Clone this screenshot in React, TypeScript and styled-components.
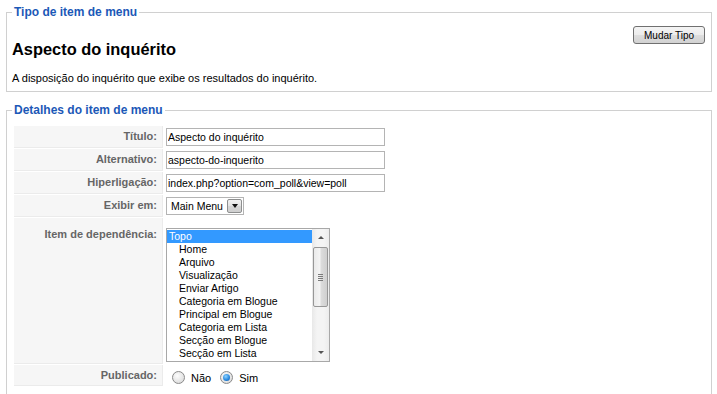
import React from 'react'
import styled, {createGlobalStyle} from 'styled-components'

const GlobalStyle = createGlobalStyle`
  html, body {
    margin: 0;
    padding: 0;
    background: #fff;
  }
  body {
    font-family: "Liberation Sans", Arial, sans-serif;
    font-size: 11px;
    color: #000;
  }
`

const Page = styled.div`
  padding: 5px 5px 0 6px;
`

const Fieldset = styled.fieldset<{$gap?: number; $bottom?: number}>`
  margin: ${({$gap}) => $gap || 0}px 0 0 0;
  border: 1px solid #d0d0d0;
  padding: 0 6px ${({$bottom}) => $bottom ?? 6}px 5px;
  min-width: 0;
`

const Legend = styled.legend`
  color: #1c58b7;
  font-size: 12px;
  font-weight: bold;
  line-height: 14px;
  padding: 0 2px;
`

const TypeHeader = styled.div`
  display: flex;
  justify-content: space-between;
  align-items: flex-start;
`

const TypeTitle = styled.h2`
  margin: 20px 0 0;
  font-size: 16.4px;
  line-height: 20px;
  font-weight: bold;
`

const TypeDesc = styled.p`
  margin: 12px 0 0;
  font-size: 11px;
  line-height: 14px;
`

const ChangeButton = styled.button`
  margin-top: 7px;
  width: 72px;
  height: 18px;
  padding: 0;
  border: 1px solid #707070;
  border-radius: 3px;
  background: linear-gradient(#f4f4f4, #ececec 50%, #dedede 50%, #d2d2d2);
  font-family: "Liberation Sans", Arial, sans-serif;
  font-size: 10px;
  color: #000;
`

const FormGrid = styled.div`
  display: grid;
  grid-template-columns: 149px max-content;
  row-gap: 1px;
  column-gap: 1px;
  margin: 9px 0 0 2px;
`

const Key = styled.div<{$top?: boolean}>`
  display: flex;
  justify-content: flex-end;
  align-items: ${({$top}) => ($top ? 'flex-start' : 'center')};
  padding: ${({$top}) => ($top ? '10px 5px 0 0' : '0 5px 0 0')};
  background: #f6f6f6;
  border-bottom: 1px solid #ebebeb;
  border-right: 1px solid #ebebeb;
  color: #666;
  font-weight: bold;
  font-size: 11px;
  line-height: 13px;
`

const Field = styled.div<{$padTop?: number}>`
  display: flex;
  align-items: center;
  padding: ${({$padTop}) => $padTop ?? 2}px 0 2px 2px;
`

const TextInput = styled.input`
  box-sizing: border-box;
  width: 219px;
  height: 18px;
  margin: 0;
  padding: 0 1px;
  border: 1px solid #b4b4b4;
  font-family: "Liberation Sans", Arial, sans-serif;
  font-size: 10.5px;
  color: #000;
  outline: none;
`

const SelectBox = styled.div`
  box-sizing: border-box;
  display: flex;
  align-items: center;
  justify-content: space-between;
  width: 78px;
  height: 18px;
  border: 1px solid #b4b4b4;
  padding: 0 1px 0 4px;
  font-size: 10.5px;
`

const SelectArrow = styled.span`
  box-sizing: border-box;
  display: flex;
  align-items: center;
  justify-content: center;
  width: 15px;
  height: 14px;
  border: 1px solid #8e8f8f;
  border-radius: 2px;
  background: linear-gradient(#f2f2f2, #e3e3e3 50%, #d6d6d6 50%, #cfcfcf);

  &::after {
    content: '';
    border-left: 3.5px solid transparent;
    border-right: 3.5px solid transparent;
    border-top: 4px solid #111;
  }
`

const ListBox = styled.div`
  box-sizing: border-box;
  display: flex;
  width: 164px;
  height: 134px;
  border: 1px solid #a8a8a8;
  background: #fff;
`

const ListItems = styled.div`
  flex: 1;
  padding: 1px 0;
  overflow: hidden;
`

const ListItem = styled.div<{$selected?: boolean; $indent?: boolean}>`
  height: 13px;
  line-height: 13px;
  padding-left: ${({$indent}) => ($indent ? 12 : 2)}px;
  font-size: 10.5px;
  white-space: nowrap;
  background: ${({$selected}) => ($selected ? '#3399ff' : 'transparent')};
  color: ${({$selected}) => ($selected ? '#fff' : '#000')};
`

const ScrollTrack = styled.div`
  display: flex;
  flex-direction: column;
  width: 17px;
  background: linear-gradient(90deg, #e8e8e8, #f4f4f4 30%, #f4f4f4 70%, #ececec);
`

const ScrollArrow = styled.div<{$down?: boolean}>`
  display: flex;
  align-items: center;
  justify-content: center;
  height: 17px;

  &::after {
    content: '';
    border-left: 3px solid transparent;
    border-right: 3px solid transparent;
    ${({$down}) =>
      $down ? 'border-top: 3px solid #555;' : 'border-bottom: 3px solid #555;'}
  }
`

const ScrollThumb = styled.div`
  box-sizing: border-box;
  display: flex;
  flex-direction: column;
  align-items: center;
  justify-content: center;
  gap: 1px;
  margin: 1px 1px 0;
  height: 60px;
  border: 1px solid #979797;
  border-radius: 2px;
  background: linear-gradient(90deg, #eaeaea, #f4f4f4 45%, #dcdcdc 55%, #cfcfcf);

  span {
    width: 5px;
    height: 1px;
    background: #7a7a7a;
  }
`

const ScrollSpacer = styled.div`
  flex: 1;
`

const RadioGroup = styled.div`
  display: flex;
  align-items: center;
  padding-left: 6px;
  font-size: 11px;
  padding-top: 4px;
`

const Radio = styled.span<{$checked?: boolean}>`
  box-sizing: border-box;
  display: inline-flex;
  align-items: center;
  justify-content: center;
  width: 13px;
  height: 13px;
  border-radius: 50%;
  border: 1px solid #8a8a8a;
  background: radial-gradient(circle at 40% 35%, #fdfdfd, #dedede 75%, #cfcfcf);

  &::after {
    content: '';
    display: ${({$checked}) => ($checked ? 'block' : 'none')};
    width: 7px;
    height: 7px;
    border-radius: 50%;
    background: radial-gradient(circle at 40% 35%, #8fd3ff, #2b8be0 55%, #0c4f9c);
  }
`

const RadioLabel = styled.span<{$gap: number}>`
  margin: 0 ${({$gap}) => $gap}px 0 6px;
`

const parentItems = [
    'Home',
    'Arquivo',
    'Visualização',
    'Enviar Artigo',
    'Categoria em Blogue',
    'Principal em Blogue',
    'Categoria em Lista',
    'Secção em Blogue',
    'Secção em Lista',
]

const App: React.FC = () => {
    return (
        <Page>
            <GlobalStyle/>
            <Fieldset>
                <Legend>Tipo de item de menu</Legend>
                <TypeHeader>
                    <div>
                        <TypeTitle>Aspecto do inquérito</TypeTitle>
                        <TypeDesc>A disposição do inquérito que exibe os resultados do inquérito.</TypeDesc>
                    </div>
                    <ChangeButton type="button">Mudar Tipo</ChangeButton>
                </TypeHeader>
            </Fieldset>

            <Fieldset $gap={11} $bottom={20}>
                <Legend>Detalhes do item de menu</Legend>
                <FormGrid>
                    <Key>Título:</Key>
                    <Field>
                        <TextInput readOnly value="Aspecto do inquérito"/>
                    </Field>

                    <Key>Alternativo:</Key>
                    <Field>
                        <TextInput readOnly value="aspecto-do-inquerito"/>
                    </Field>

                    <Key>Hiperligação:</Key>
                    <Field>
                        <TextInput readOnly value="index.php?option=com_poll&view=poll"/>
                    </Field>

                    <Key>Exibir em:</Key>
                    <Field>
                        <SelectBox>
                            Main Menu
                            <SelectArrow/>
                        </SelectBox>
                    </Field>

                    <Key $top>Item de dependência:</Key>
                    <Field $padTop={10}>
                        <ListBox>
                            <ListItems>
                                <ListItem $selected>Topo</ListItem>
                                {parentItems.map(item => (
                                    <ListItem key={item} $indent>{item}</ListItem>
                                ))}
                            </ListItems>
                            <ScrollTrack>
                                <ScrollArrow/>
                                <ScrollThumb>
                                    <span/>
                                    <span/>
                                    <span/>
                                    <span/>
                                </ScrollThumb>
                                <ScrollSpacer/>
                                <ScrollArrow $down/>
                            </ScrollTrack>
                        </ListBox>
                    </Field>

                    <Key>Publicado:</Key>
                    <Field>
                        <RadioGroup>
                            <Radio/>
                            <RadioLabel $gap={9}>Não</RadioLabel>
                            <Radio $checked/>
                            <RadioLabel $gap={0}>Sim</RadioLabel>
                        </RadioGroup>
                    </Field>
                </FormGrid>
            </Fieldset>
        </Page>
    )
}

export default App
